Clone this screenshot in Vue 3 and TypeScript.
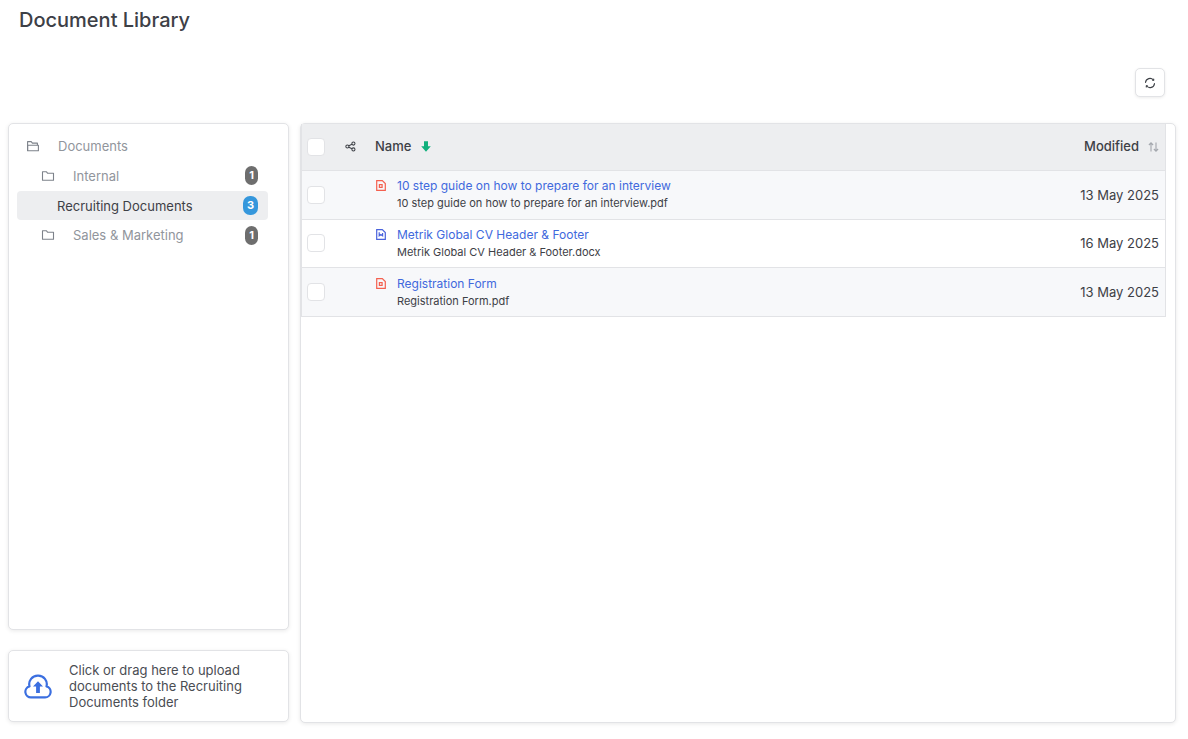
<script setup lang="ts">
interface TreeItem {
  label: string
  count?: number
  level: number
  icon?: 'open' | 'closed'
  active?: boolean
}

interface DocRow {
  title: string
  file: string
  modified: string
  kind: 'pdf' | 'doc'
}

const tree: TreeItem[] = [
  { label: 'Documents', level: 0, icon: 'open' },
  { label: 'Internal', level: 1, icon: 'closed', count: 1 },
  { label: 'Recruiting Documents', level: 1, count: 3, active: true },
  { label: 'Sales & Marketing', level: 1, icon: 'closed', count: 1 },
]

const docs: DocRow[] = [
  { title: '10 step guide on how to prepare for an interview', file: '10 step guide on how to prepare for an interview.pdf', modified: '13 May 2025', kind: 'pdf' },
  { title: 'Metrik Global CV Header & Footer', file: 'Metrik Global CV Header & Footer.docx', modified: '16 May 2025', kind: 'doc' },
  { title: 'Registration Form', file: 'Registration Form.pdf', modified: '13 May 2025', kind: 'pdf' },
]
</script>

<template>
  <div class="page">
    <h1 class="title">Document Library</h1>

    <div class="toolbar">
      <button class="refresh" type="button" aria-label="Refresh">
        <svg width="12" height="12" viewBox="0 0 12 12" fill="none" stroke="#3d4046" stroke-width="1.1" stroke-linecap="round" stroke-linejoin="round">
          <path d="M1.5 5.4A4.5 4.5 0 0 1 9.4 3" />
          <path d="M10.5 6.6A4.5 4.5 0 0 1 2.6 9" />
          <path d="M9.7 2v1.2H8.6" />
          <path d="M2.3 10V8.8h1.1" />
        </svg>
      </button>
    </div>

    <div class="columns">
      <aside class="side">
        <nav class="card tree">
          <div
            v-for="item in tree"
            :key="item.label"
            class="tree-row"
            :class="[`level-${item.level}`, { active: item.active }]"
          >
            <svg v-if="item.icon === 'open'" class="folder" width="14" height="14" viewBox="0 0 14 14" fill="none" stroke="#7d828a" stroke-width="1.1" stroke-linejoin="round">
              <path d="M1.6 11.8V2.6h3.6l1.2 1.5h5v2.2" />
              <path d="M1.6 11.8V6.3h10.8v5.5z" />
            </svg>
            <svg v-else-if="item.icon === 'closed'" class="folder" width="14" height="14" viewBox="0 0 14 14" fill="none" stroke="#7d828a" stroke-width="1.1" stroke-linejoin="round">
              <path d="M1.5 2.8h4l1.2 1.5h5.8v7H1.5z" />
            </svg>
            <span class="tree-label">{{ item.label }}</span>
            <span v-if="item.count" class="badge" :class="{ blue: item.active }">{{ item.count }}</span>
          </div>
        </nav>

        <div class="card upload">
          <svg width="28" height="25" viewBox="0 0 28 25" fill="none">
            <path d="M7.2 23.4h13.8a5.6 5.6 0 0 0 1.5-11A8.6 8.6 0 0 0 14 1.6a8.6 8.6 0 0 0-8.5 10.8A5.6 5.6 0 0 0 7.2 23.4z" stroke="#3b6fe0" stroke-width="2.2" stroke-linejoin="round" />
            <path d="M14 7.2l5 5.4h-3.1V19h-3.8v-6.4H9z" fill="#3b6fe0" />
          </svg>
          <p>Click or drag here to upload documents to the Recruiting Documents folder</p>
        </div>
      </aside>

      <main class="card list">
        <div class="table">
          <div class="head">
            <span class="check"></span>
            <svg class="share" width="11" height="11" viewBox="0 0 12 12" fill="none" stroke="#3d4046" stroke-width="1.1">
              <circle cx="2.6" cy="6" r="1.7" />
              <circle cx="9.2" cy="2.8" r="1.7" />
              <circle cx="9.2" cy="9.2" r="1.7" />
              <path d="M4.2 5.2l3.4-1.6M4.2 6.8l3.4 1.6" />
            </svg>
            <span class="head-name">Name</span>
            <svg class="sort-down" width="10" height="11" viewBox="0 0 10 11">
              <path d="M3 0.3h4v4.9h2.8L5 10.7 0.2 5.2H3z" fill="#10b07c" />
            </svg>
            <span class="head-modified">Modified</span>
            <svg class="sort-both" width="11" height="10" viewBox="0 0 11 10" fill="none" stroke="#a3a7ad" stroke-width="1.1">
              <path d="M3 9.5V1M0.9 3 3 0.8 5.1 3" />
              <path d="M8 0.5V9M5.9 7 8 9.2 10.1 7" />
            </svg>
          </div>

          <div v-for="doc in docs" :key="doc.title" class="row">
            <span class="check"></span>
            <svg class="file" width="10" height="11" viewBox="0 0 10 11" fill="none" :stroke="doc.kind === 'pdf' ? '#f4604f' : '#4a63dc'" stroke-width="1.2">
              <path d="M0.7 0.6h5.6l3 3v6.8H0.7z" />
              <path v-if="doc.kind === 'pdf'" d="M3.4 4.7h2.7v2.7H3.4z" />
              <path v-else d="M3.2 3.2v3.6l1.7-1.2 1.7 1.2V4" />
            </svg>
            <div class="names">
              <a class="doc-title">{{ doc.title }}</a>
              <span class="doc-file">{{ doc.file }}</span>
            </div>
            <span class="date">{{ doc.modified }}</span>
          </div>
        </div>
      </main>
    </div>
  </div>
</template>

<style>
html,
body {
  margin: 0;
  background: #fff;
}
</style>

<style scoped>
.page {
  box-sizing: border-box;
  height: 739px;
  padding: 0 12px 16px 8px;
  display: flex;
  flex-direction: column;
  font-family: Inter, "Noto Sans", sans-serif;
  color: #3d4046;
  overflow: hidden;
}

.title {
  box-sizing: border-box;
  margin: 0;
  padding: 8px 0 0 11px;
  height: 41px;
  font-size: 20px;
  line-height: 25px;
  font-weight: 500;
  color: #3d4046;
}

.toolbar {
  flex: none;
  box-sizing: border-box;
  height: 82px;
  display: flex;
  justify-content: flex-end;
  padding: 27px 11px 0 0;
}

.refresh {
  width: 30px;
  height: 29px;
  padding: 0;
  display: flex;
  align-items: center;
  justify-content: center;
  background: #fff;
  border: 1px solid #e2e3e6;
  border-radius: 5px;
  box-shadow: 0 1px 3px rgba(0, 0, 0, 0.08);
}

.columns {
  flex: 1;
  display: flex;
  gap: 11px;
  min-height: 0;
}

.card {
  box-sizing: border-box;
  background: #fff;
  border: 1px solid #e2e3e6;
  border-radius: 5px;
  box-shadow: 0 1px 4px rgba(0, 0, 0, 0.09);
}

.side {
  width: 281px;
  flex: none;
  display: flex;
  flex-direction: column;
  gap: 20px;
  margin-bottom: 1px;
}

.tree {
  flex: 1;
  padding: 7.5px 20px 0 8px;
}

.tree-row {
  height: 29.67px;
  display: flex;
  align-items: center;
  font-size: 13px;
  color: #91959c;
  border-radius: 4px;
  box-sizing: border-box;
  padding-right: 10px;
}

.level-0 {
  padding-left: 9px;
}

.level-1 {
  padding-left: 24px;
}

.folder {
  flex: none;
  margin-right: 18px;
}

.tree-row.active {
  background: #edeef0;
  color: #3d4046;
  padding-left: 40px;
}

.tree-label {
  flex: 1;
}

.badge {
  box-sizing: border-box;
  min-width: 13px;
  height: 19px;
  padding: 0 3px;
  border-radius: 7px;
  background: #6e6e6e;
  color: #fff;
  font-size: 11px;
  font-weight: 700;
  line-height: 19px;
  text-align: center;
}

.badge.blue {
  min-width: 15px;
  background: #3597dc;
}

.upload {
  flex: none;
  height: 72px;
  display: flex;
  align-items: center;
  padding: 0 16px 0 15px;
  gap: 17px;
}

.upload svg {
  flex: none;
}

.upload p {
  margin: 0;
  font-size: 13px;
  line-height: 16px;
  color: #4a4d53;
}

.list {
  flex: 1;
  min-width: 0;
  padding-right: 9px;
}

.table {
  border-left: 1px solid #e2e3e6;
  border-right: 1px solid #e2e3e6;
}

.head {
  height: 47px;
  box-sizing: border-box;
  display: flex;
  align-items: center;
  background: #edeef0;
  border-bottom: 1px solid #e2e3e6;
  padding: 0 6px 0 5px;
}

.check {
  flex: none;
  box-sizing: border-box;
  width: 18px;
  height: 18px;
  background: #fff;
  border: 1px solid #e2e3e6;
  border-radius: 4px;
}

.share {
  flex: none;
  margin: -1px 0 0 20px;
}

.head-name {
  margin: -2px 0 0 19px;
  font-size: 13px;
  font-weight: 500;
}

.sort-down {
  margin: -1px 0 0 10px;
}

.head-modified {
  margin: -2px 0 0 auto;
  font-size: 13px;
  font-weight: 500;
}

.sort-both {
  margin: -1px 0 0 9px;
}

.row {
  box-sizing: border-box;
  height: 48.67px;
  display: flex;
  align-items: center;
  padding: 0 6px 0 5px;
  border-bottom: 1px solid #e2e3e6;
  background: #fff;
}

.row:nth-child(even) {
  background: #f7f8fa;
}

.file {
  flex: none;
  margin: -18px 0 0 51px;
}

.names {
  display: flex;
  flex-direction: column;
  margin: -1px 0 0 11px;
  gap: 3px;
  min-width: 0;
}

.doc-title {
  font-size: 12px;
  line-height: 15px;
  color: #4169dd;
}

.doc-file {
  font-size: 11px;
  line-height: 14px;
  color: #3d4046;
}

.date {
  margin-left: auto;
  font-size: 13px;
  color: #3d4046;
}
</style>
